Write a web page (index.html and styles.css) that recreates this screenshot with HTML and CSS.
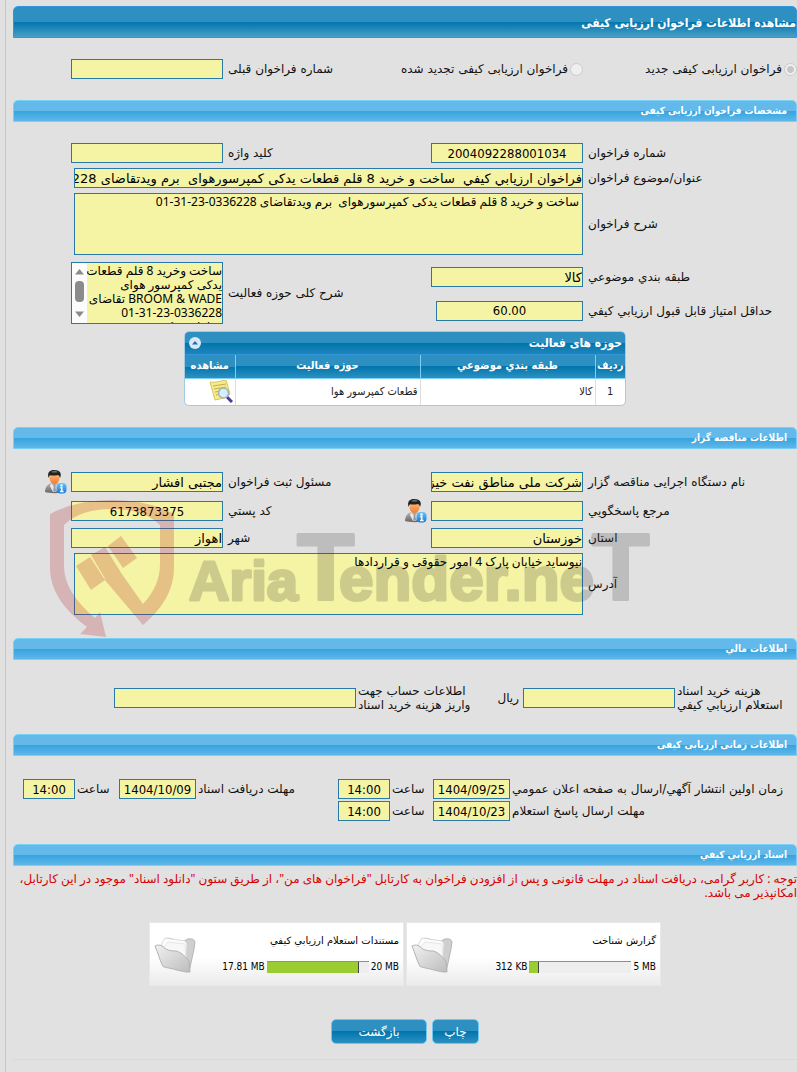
FILE: index.html
```html
<!DOCTYPE html>
<html lang="fa" dir="rtl">
<head>
<meta charset="utf-8">
<title>مشاهده اطلاعات فراخوان ارزیابی کیفی</title>
<link rel="stylesheet" href="styles.css">
</head>
<body>
<svg class="defs" width="0" height="0" aria-hidden="true">
  <defs>
    <linearGradient id="g-suit" x1="0" y1="0" x2="0" y2="1"><stop offset="0" stop-color="#b5b5b5"/><stop offset="1" stop-color="#666"/></linearGradient>
    <linearGradient id="g-face" x1="0" y1="0" x2="0" y2="1"><stop offset="0" stop-color="#ffc08a"/><stop offset="1" stop-color="#f47d2c"/></linearGradient>
    <linearGradient id="g-info" x1="0" y1="0" x2="0" y2="1"><stop offset="0" stop-color="#6cc4fb"/><stop offset="1" stop-color="#1478d4"/></linearGradient>
    <linearGradient id="g-folder" x1="0" y1="0" x2="1" y2="1"><stop offset="0" stop-color="#f1f1f1"/><stop offset="1" stop-color="#bdbdbd"/></linearGradient>
    <symbol id="person" viewBox="0 0 22 24">
      <path d="M0 22c0-5 3-8 6-9h6c4 1 7 4 7 9-3 1.500-15 1.500-19 0z" fill="url(#g-suit)"/>
      <path d="M6 13l3.500 4 3.500-4 1 3-3 6H8l-3-6z" fill="#e8e8e8"/>
      <path d="M8.800 16h1.600l.6 5-1.400 1.500L8.200 21z" fill="#999"/>
      <ellipse cx="9.500" cy="8" rx="5" ry="6" fill="url(#g-face)"/>
      <path d="M3.500 8C2 2 5 0 9 0c6 0 8 3 6 8-.5-2-1-2.500-2-3-3 .8-6 .6-8 .2-.8.800-1.200 1.800-1.500 2.800z" fill="#222"/>
      <path d="M6 2C8 .8 11 .8 13 2c-2 .8-5 .8-7 0z" fill="#777"/>
      <rect x="11.500" y="13" width="10" height="10.500" rx="4" fill="url(#g-info)"/>
      <circle cx="16.500" cy="15.500" r="1.200" fill="#fff"/>
      <path d="M15.300 17.800h1.500v3.500M15 21.500h3.600" stroke="#fff" stroke-width="1.400" fill="none"/>
    </symbol>
    <symbol id="folder" viewBox="0 0 42 37">
      <path d="M10 5l4-3 8 2 6 2 6-3c4-.5 6 0 7 3l-1 7-5 23-8-9z" fill="#cfcfcf" stroke="#b5b5b5"/>
      <path d="M7 9l4-7 20 3 2 3-2 18z" fill="#fdfdfd" stroke="#dadada"/>
      <path d="M9 12l5-6 17 2 1 16z" fill="#f8f8f8" stroke="#e6e6e6"/>
      <path d="M1 10c3-1.500 5-1 7 0 4 4 8 5 14 5 5 1 11 7 13 10l1 11c-4 .500-9-1-13-2-5-1.500-10-2-14-3.500C6 25 4 17 1 10z" fill="url(#g-folder)" stroke="#b3b3b3"/>
    </symbol>
  </defs>
</svg>
<main class="page">
  <h1 class="title">مشاهده اطلاعات فراخوان ارزیابی کیفی</h1>

  <div class="fields kind">
    <label class="radio"><input type="radio" name="kind" checked disabled>فراخوان ارزیابی کیفی جدید</label>
    <label class="radio span2"><input type="radio" name="kind" disabled>فراخوان ارزیابی کیفی تجدید شده</label>
    <label class="label" for="prev">شماره فراخوان قبلی</label>
    <input class="box" id="prev" readonly>
  </div>

  <section>
    <h2 class="bar">مشخصات فراخوان ارزیابی کیفی</h2>
    <div class="fields details">
      <label class="label" for="num">شماره فراخوان</label>
      <input class="box num" id="num" value="2004092288001034" readonly>
      <label class="label col4" for="key">کلید واژه</label>
      <input class="box" id="key" readonly>
      <label class="label col1" for="subject">عنوان/موضوع فراخوان</label>
      <input class="box wide" id="subject" value="فراخوان ارزيابي کيفي  ساخت و خرید 8 قلم قطعات یدکی کمپرسورهوای  برم ویدتقاضای 0336228-23-31-01" readonly>
      <label class="label col1" for="desc">شرح فراخوان</label>
      <textarea class="box area wide inset" id="desc" readonly>ساخت و خرید 8 قلم قطعات یدکی کمپرسورهوای  برم ویدتقاضای 0336228-23-31-01</textarea>
    </div>
    <div class="fields scope">
      <label class="label" for="cat">طبقه بندي موضوعي</label>
      <input class="box" id="cat" value="کالا" readonly>
      <label class="label col1 row2" for="min">حداقل امتیاز قابل قبول ارزيابي کيفي</label>
      <input class="box num min row2" id="min" value="60.00" readonly>
      <label class="label col4 rows2" for="scope">شرح کلی حوزه فعالیت</label>
      <div class="scroller col5 rows2">
        <textarea class="box area" id="scope" readonly>ساخت وخرید 8 قلم قطعات
یدکی کمپرسور هوای
BROOM &amp; WADE تقاضای
01-31-23-0336228
قطعات یدکی</textarea>
        <svg width="15" height="60" viewBox="0 0 15 60" aria-hidden="true"><path fill="#fcfcfc" d="M0 0h15v60H0z"/><path fill="#8b8b8b" d="M3 11.500L7.500 6l4.500 5.500zM3 48.500L7.500 54l4.500-5.500z"/><rect x="3" y="18" width="9" height="21" rx="4" fill="#8b8b8b"/></svg>
      </div>
    </div>
    <div class="grid-box">
      <div class="grid-title"><span>حوزه های فعالیت</span>
        <button class="fold" aria-label="بستن"><svg width="12" height="12" viewBox="0 0 12 12"><circle cx="6" cy="6" r="6" fill="#d9e8f8"/><path d="M3 7.500L6 4l3 3.500z" fill="#1b6fa5"/></svg></button>
      </div>
      <table class="grid">
        <thead><tr><th class="c-row">ردیف</th><th class="c-cat">طبقه بندي موضوعي</th><th>حوزه فعالیت</th><th class="c-view">مشاهده</th></tr></thead>
        <tbody><tr><td class="center">1</td><td>کالا</td><td>قطعات کمپرسور هوا</td>
          <td class="view"><button class="plain" aria-label="مشاهده"><svg width="24" height="23" viewBox="0 0 24 23"><path d="M1 2C6 3 11 1 17 0l4 14c-4 4-10 5-15 6z" fill="#f6eb8b" stroke="#d8c45a"/><path d="M4 6l13-2M5 9l12-2M6 12l6-1M7 15l4-1" stroke="#c3ae4c" fill="none"/><path d="M18 17l5 5" stroke="#4a3a92" stroke-width="3"/><circle cx="14.500" cy="13" r="5" fill="#d8eef8" stroke="#a2b2bd" stroke-width="1.500"/></svg></button></td></tr></tbody>
      </table>
    </div>
  </section>

  <section class="bidder">
    <h2 class="bar">اطلاعات مناقصه گزار</h2>
    <div class="fields owner">
      <label class="label" for="org">نام دستگاه اجرایی مناقصه گزار</label>
      <input class="box" id="org" value="شرکت ملی مناطق نفت خیز جنوب" readonly>
      <label class="label col4" for="reg">مسئول ثبت فراخوان</label>
      <input class="box" id="reg" value="مجتبی افشار" readonly>
      <button class="plain" aria-label="اطلاعات مسئول"><svg width="22" height="24"><use href="#person"/></svg></button>
      <label class="label col1" for="ref">مرجع پاسخگويي</label>
      <input class="box" id="ref" readonly>
      <button class="plain" aria-label="اطلاعات مرجع"><svg width="22" height="24"><use href="#person"/></svg></button>
      <label class="label" for="post">کد پستي</label>
      <input class="box num" id="post" value="6173873375" readonly>
      <label class="label col1" for="prov">استان</label>
      <input class="box" id="prov" value="خوزستان" readonly>
      <label class="label col4" for="city">شهر</label>
      <input class="box" id="city" value="اهواز" readonly>
      <label class="label col1" for="addr">آدرس</label>
      <textarea class="box area wide" id="addr" readonly>نیوساید خیابان پارک 4 امور حقوقی و قراردادها</textarea>
    </div>
    <svg class="watermark" width="620" height="145" viewBox="0 0 620 145" direction="ltr" aria-hidden="true">
      <g fill="#b4141e" opacity="0.220">
        <path d="M4 20Q30 6 66 6t62 14V74Q128 105 97 131L58 85l15-9 24 34Q114 92 114 70V31Q98 15 66 15T18 31V72Q18 98 49 124L54 118 60 143 34 140 41 133Q4 106 4 74z"/>
        <path d="M30 72l14-9 15 23-14 10zM45 61l14-8 15 24-14 9zM62 52l13-10 16 22-14 10z"/>
      </g>
      <g class="brand" opacity="0.200">
        <text x="143" y="106" class="small">Aria</text>
        <text x="251" y="106" class="tall">T</text>
        <text x="293" y="106" class="mid">ender.ne</text>
        <text x="546" y="106" class="tall">T</text>
      </g>
    </svg>
  </section>

  <section>
    <h2 class="bar">اطلاعات مالي</h2>
    <div class="money">
      <label class="label" for="cost">هزینه خرید اسناد<br>استعلام ارزيابي کيفي</label>
      <input class="box" id="cost" readonly>
      <span>ریال</span>
      <label class="label" for="acc">اطلاعات حساب جهت<br>واریز هزینه خرید اسناد</label>
      <input class="box" id="acc" readonly>
    </div>
  </section>

  <section>
    <h2 class="bar">اطلاعات زمانی ارزیابی کیفی</h2>
    <div class="times">
      <label class="label" for="d1">زمان اولین انتشار آگهي/ارسال به صفحه اعلان عمومي</label>
      <input class="box num" id="d1" value="1404/09/25" readonly>
      <label class="label" for="t1">ساعت</label>
      <input class="box num" id="t1" value="14:00" readonly>
      <label class="label" for="d2">مهلت دریافت اسناد</label>
      <input class="box num" id="d2" value="1404/10/09" readonly>
      <label class="label" for="t2">ساعت</label>
      <input class="box num" id="t2" value="14:00" readonly>
      <label class="label" for="d3">مهلت ارسال پاسخ استعلام</label>
      <input class="box num" id="d3" value="1404/10/23" readonly>
      <label class="label" for="t3">ساعت</label>
      <input class="box num" id="t3" value="14:00" readonly>
    </div>
  </section>

  <section>
    <h2 class="bar">اسناد ارزيابي کيفي</h2>
    <p class="notice">توجه : کاربر گرامی، دریافت اسناد در مهلت قانونی و پس از افزودن فراخوان به کارتابل "فراخوان های من"، از طریق ستون "دانلود اسناد" موجود در این کارتابل، امکانپذیر می باشد.</p>
    <div class="cards">
      <article class="card">
        <div class="card-body"><div>گزارش شناخت</div>
          <div class="usage"><span>5 MB</span><div class="track"><div class="fill" style="width:8%"></div></div><span>312 KB</span></div></div>
        <svg width="42" height="37"><use href="#folder"/></svg>
      </article>
      <article class="card">
        <div class="card-body"><div>مستندات استعلام ارزيابي کيفي</div>
          <div class="usage"><span>20 MB</span><div class="track"><div class="fill" style="width:90%"></div></div><span>17.81 MB</span></div></div>
        <svg width="42" height="37"><use href="#folder"/></svg>
      </article>
    </div>
    <div class="actions"><button class="btn">چاپ</button><button class="btn back">بازگشت</button></div>
  </section>
</main>
</body>
</html>
```
FILE: styles.css
```css
* { box-sizing: border-box; }
body {
  margin: 0;
  background: #e1e1e1;
  color: #111;
  font: 12px/14px "DejaVu Sans", sans-serif;
}
.defs { position: absolute; }
.page {
  min-height: 100vh;
  margin-left: 5px;
  padding: 6px 0 0 7px;
  border-left: 1px solid #c6c6c6;
}
h1, h2, p { margin: 0; }
.title {
  height: 32px;
  border: 1px solid #3296de;
  border-radius: 5px 5px 0 0;
  background: linear-gradient(#2d90c0 50%, #0075ae 50%, #4a9fc6);
  color: #fff;
  font-family: "DejaVu Sans Condensed", "DejaVu Sans", sans-serif;
  font-size: 12px;
  line-height: 32px;
}
.bar {
  height: 22px;
  padding-right: 9px;
  border: 1px solid #7acff5;
  border-radius: 5px 5px 0 0;
  background: linear-gradient(#62b9ea 50%, #36a3df 50%, #5fb7e9);
  color: #fff;
  font-family: "DejaVu Sans Condensed", "DejaVu Sans", sans-serif;
  font-size: 10px;
  line-height: 20px;
}
.fields {
  display: grid;
  grid-template-columns: minmax(0, 209fr) 152px 24px minmax(0, 169fr) 152px 24px;
  gap: 5px;
  align-items: center;
  padding-left: 29px;
}
.kind { padding-top: 21px; padding-bottom: 21px; }
.details { padding-top: 21px; }
.scope { padding-top: 7px; grid-template-rows: 30px 27px; }
.owner { padding-top: 21px; padding-bottom: 23px; }
.span2 { grid-column: span 2; }
.col1 { grid-column: 1; }
.col4 { grid-column: 4; }
.col5 { grid-column: 5; }
.rows2 { grid-row: 1 / span 2; }
.row2 { grid-row: 2; }
.label { text-align: left; white-space: nowrap; }
.radio { display: flex; align-items: center; gap: 2px; white-space: nowrap; }
.radio input {
  appearance: none;
  flex: none;
  width: 13px;
  height: 13px;
  margin: 0;
  border: 1px solid #cbcbcb;
  border-radius: 50%;
  background: #efefef;
}
.radio input:checked { background: radial-gradient(circle, #c6c6c6 3px, #efefef 4px); }
.box {
  width: 100%;
  min-width: 0;
  height: 20px;
  padding: 0;
  border: 1px solid #2878a8;
  border-radius: 0;
  background: #f5f3a4;
  color: #000;
  font: 13px/16px "DejaVu Sans", sans-serif;
}
.num {
  direction: ltr;
  text-align: center;
  font-family: "DejaVu Sans Condensed", "DejaVu Sans", sans-serif;
}
.min { width: 147px; grid-column: 2; }
.wide { grid-column: 2 / span 4; width: auto; margin-left: 3px; }
.area {
  display: block;
  height: 62px;
  padding-top: 1px;
  font-family: "Noto Sans", "DejaVu Sans", sans-serif;
  font-size: 12px;
  line-height: 14px;
  resize: none;
  overflow: hidden;
}
.inset { padding-right: 3px; }
.scroller { display: flex; height: 62px; border: 1px solid #2878a8; }
.scroller .area { flex: 1; height: 60px; padding-top: 1px; border: 0; white-space: pre; }
.scroller svg { flex: none; }
.plain { display: block; padding: 0; border: 0; background: none; line-height: 0; }
.owner .plain { margin-right: -3px; }

.grid-box {
  width: 442px;
  margin: 7px auto 21px;
  border: 1px solid #a4cbe2;
  border-radius: 5px;
  background: #fff;
  overflow: hidden;
}
.grid-title {
  display: flex;
  align-items: center;
  justify-content: space-between;
  height: 23px;
  padding: 0 3px 0 4px;
  border-bottom: 1px solid #3296de;
  background: linear-gradient(#2d90c0 50%, #0075ae 50%, #1f86b8);
  color: #fff;
  font-family: "DejaVu Sans Condensed", "DejaVu Sans", sans-serif;
  font-weight: 700;
}
.fold { display: block; padding: 0; border: 0; background: none; line-height: 0; }
.grid {
  width: 100%;
  border-collapse: collapse;
  table-layout: fixed;
  font-family: "DejaVu Sans Condensed", "DejaVu Sans", sans-serif;
  font-size: 11px;
}
.grid th {
  height: 23px;
  padding: 0;
  border-left: 1px solid #7acff5;
  border-bottom: 1px solid #7acff5;
  background: linear-gradient(#2d90c0 50%, #0075ae 50%, #2d90c0);
  color: #fff;
}
.grid td { height: 27px; padding: 0 2px; border-left: 1px solid #ddd; color: #222; }
.grid th:last-child, .grid td:last-child { border-left: 0; }
.grid .center { text-align: center; }
.c-row { width: 30px; }
.c-cat { width: 175px; }
.c-view { width: 50px; }

.bidder { position: relative; }
.watermark { position: absolute; left: 33px; top: 67px; pointer-events: none; }
.brand {
  fill: #323232;
  stroke: #323232;
  stroke-width: 3px;
  stroke-linejoin: round;
  font-family: "Liberation Sans", Arial, sans-serif;
  font-weight: 700;
}
.brand .small { font-size: 56px; }
.brand .mid { font-size: 62px; }
.brand .tall { font-size: 94px; }

.money {
  display: grid;
  grid-template-columns: minmax(0, 120fr) 152px 30px minmax(0, 131fr) 242px;
  gap: 2px;
  align-items: center;
  padding: 24px 0 22px 101px;
}
.money span { padding-right: 2px; }
.times {
  display: grid;
  grid-template-columns: minmax(0, 285fr) 77px 39px 52px minmax(0, 138fr) 77px 40px 52px;
  gap: 2px;
  align-items: center;
  padding: 23px 0 23px 10px;
}
.notice {
  padding-top: 6px;
  color: #d80000;
  font-family: "Noto Sans", "DejaVu Sans", sans-serif;
}
.cards { display: flex; justify-content: center; gap: 2px; padding-top: 22px; }
.card {
  display: flex;
  align-items: center;
  justify-content: space-between;
  width: 255px;
  height: 64px;
  padding: 0 4px;
  border: 1px solid #e8e8e8;
  background: linear-gradient(#fff 55%, #ebebeb);
  color: #000;
  font-size: 10px;
}
.card-body { display: grid; gap: 12px; }
.usage {
  display: flex;
  align-items: center;
  gap: 2px;
  font-family: "DejaVu Sans Condensed", "DejaVu Sans", sans-serif;
}
.usage span { direction: ltr; }
.track { width: 102px; height: 12px; border-top: 1px solid #8f8f8f; border-left: 1px solid #aaa; background: #eee; direction: ltr; }
.fill { height: 100%; border-right: 1px solid #444; background: #9acd32; }
.actions { display: flex; justify-content: center; gap: 5px; padding: 33px 0 15px; border-bottom: 1px solid #dadada; }
.btn {
  width: 47px;
  height: 25px;
  padding: 0;
  border: 1px solid #6dc8f0;
  border-radius: 5px;
  background: linear-gradient(#2d90c0 50%, #0075ae 50%, #2d90c0);
  color: #fff;
  font: 12px/20px "DejaVu Sans", sans-serif;
}
.back { width: 96px; }
```
